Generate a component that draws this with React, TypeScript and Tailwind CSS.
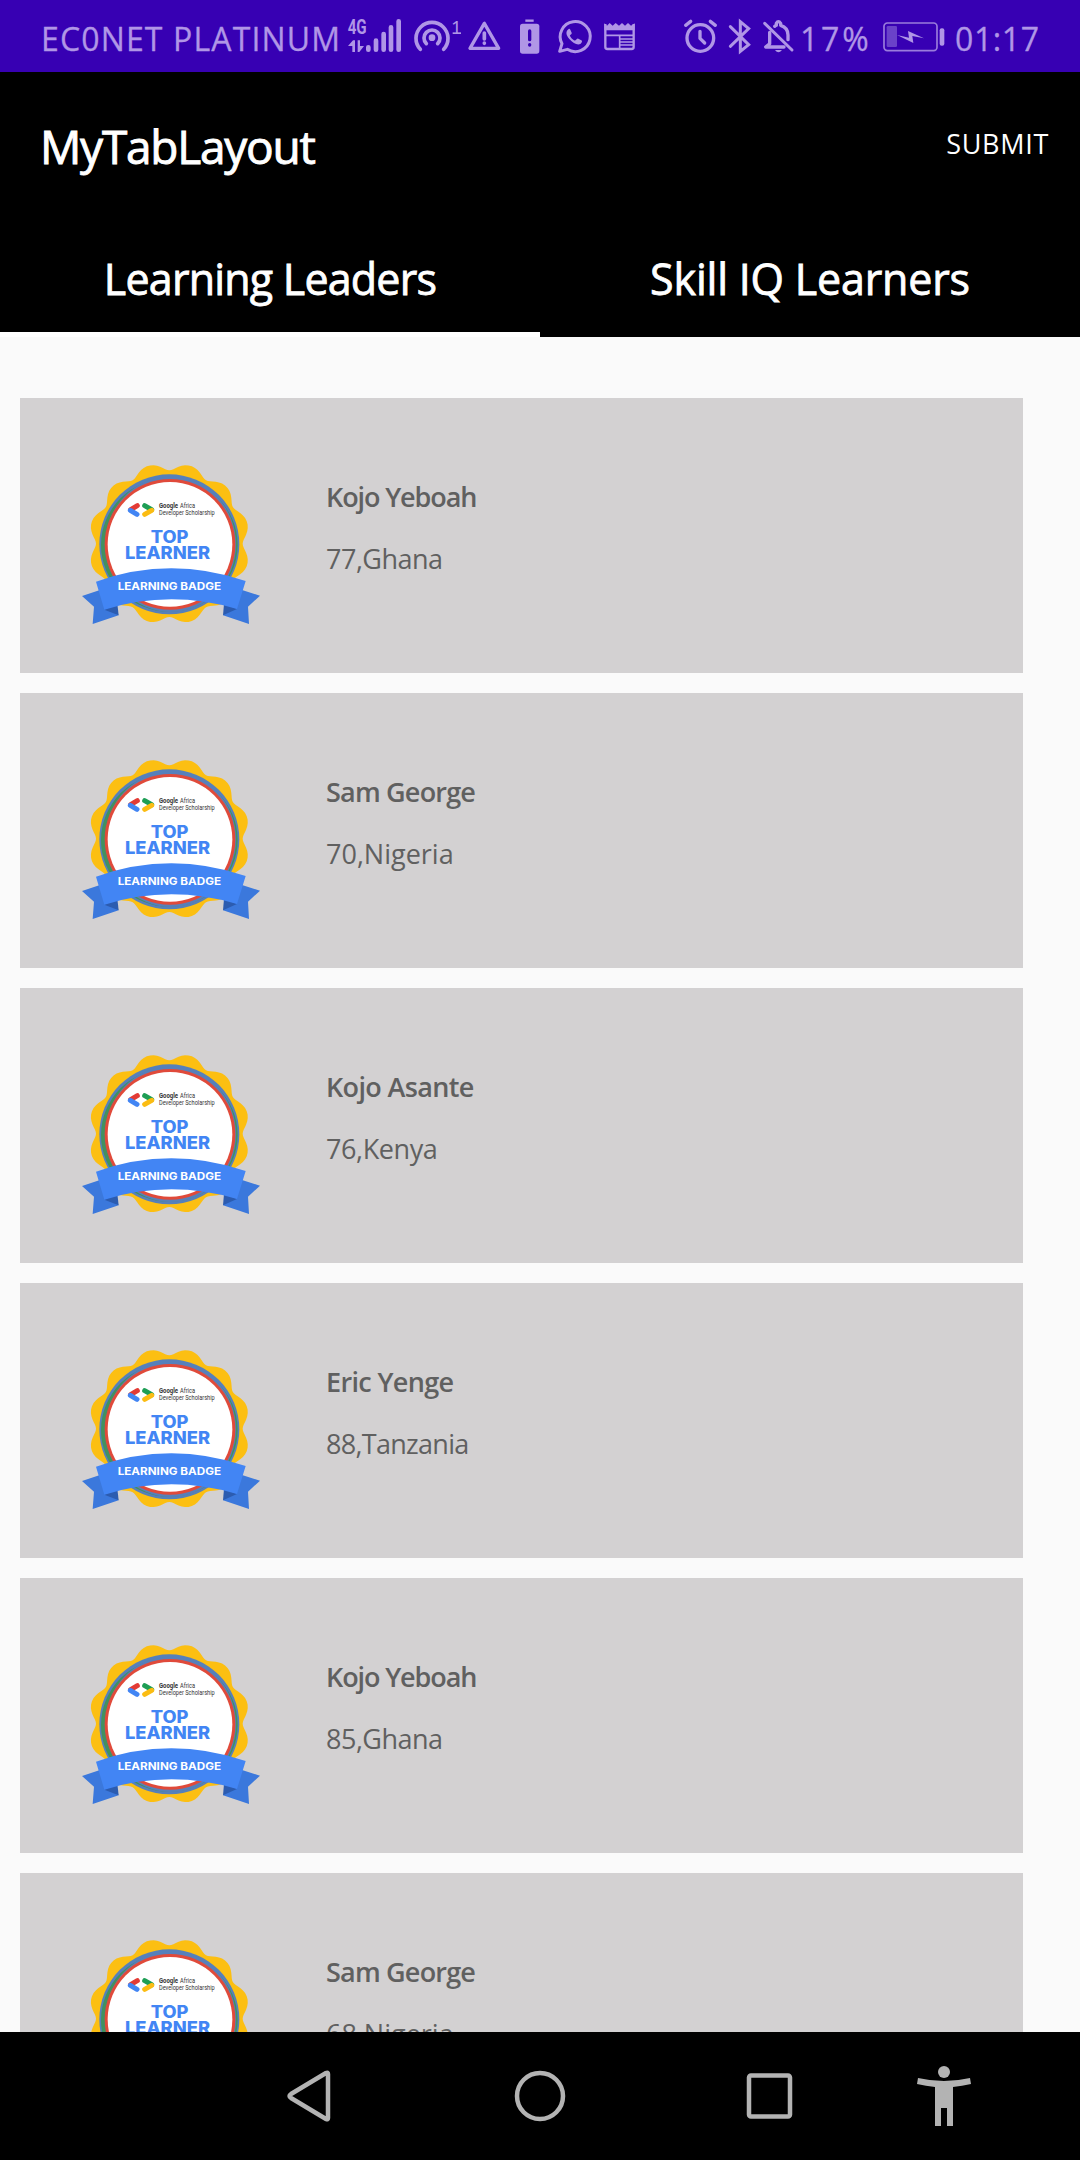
const LEARNERS = [
  { name: "Kojo Yeboah", detail: "77,Ghana", nameClass: "tracking-[-1.1px]", detailClass: "tracking-[-0.5px]" },
  { name: "Sam George", detail: "70,Nigeria", nameClass: "tracking-[-0.8px]", detailClass: "tracking-normal" },
  { name: "Kojo Asante", detail: "76,Kenya", nameClass: "tracking-[-0.65px]", detailClass: "tracking-[-0.4px]" },
  { name: "Eric Yenge", detail: "88,Tanzania", nameClass: "tracking-[-0.65px]", detailClass: "tracking-[-0.7px]" },
  { name: "Kojo Yeboah", detail: "85,Ghana", nameClass: "tracking-[-1.1px]", detailClass: "tracking-[-0.5px]" },
  { name: "Sam George", detail: "68,Nigeria", nameClass: "tracking-[-0.8px]", detailClass: "tracking-normal" },
];

const scallop = (() => {
  const pts: string[] = [];
  for (let i = 0; i < 360; i += 2) {
    const a = (i * Math.PI) / 180;
    const t = 12 * (a - Math.PI / 12);
    const r = 231 + 11 * Math.cos(t);
    const skew = a - 0.02 * Math.sin(t) * -1;
    pts.push(`${(298 + r * Math.sin(skew)).toFixed(1)} ${(281 - r * Math.cos(skew)).toFixed(1)}`);
  }
  return `M${pts.join("L")}Z`;
})();

function Badge() {
  return (
    <svg viewBox="0 0 600 570" className="h-[190px] w-[200px] shrink-0">
      <path d={scallop} fill="#fcbf12" />
      <circle cx="298" cy="283" r="210" fill="#5680bb" />
      <ellipse cx="298" cy="285" rx="205" ry="200" fill="#42915f" />
      <ellipse cx="302" cy="283" rx="196" ry="203" fill="#5680bb" />
      <circle cx="300" cy="283" r="196" fill="#e04a3a" />
      <circle cx="300" cy="283" r="187" fill="#fff" />
      <g strokeWidth="15" strokeLinecap="round" fill="none">
        <path d="M202 167L182 179" stroke="#e33b35" />
        <path d="M181 181L201 193" stroke="#4285f4" />
        <path d="M224 167L245 179" stroke="#1e9e55" />
        <path d="M245 181L224 193" stroke="#fbbc12" />
      </g>
      <g fontFamily="Roboto, sans-serif" fill="#333">
        <text x="267" y="174" fontSize="19" fontWeight="700" textLength="57" lengthAdjust="spacingAndGlyphs">Google</text>
        <text x="330" y="174" fontSize="19" textLength="45" lengthAdjust="spacingAndGlyphs">Africa</text>
        <text x="267" y="195" fontSize="19" textLength="167" lengthAdjust="spacingAndGlyphs">Developer Scholarship</text>
      </g>
      <g fontFamily="Inter, sans-serif" fontWeight="800" fill="#4285f4">
        <text x="242" y="279" fontSize="50" textLength="113" lengthAdjust="spacingAndGlyphs">TOP</text>
        <text x="165" y="327" fontSize="52" textLength="255" lengthAdjust="spacingAndGlyphs">LEARNER</text>
      </g>
      <path d="M36 438L90 420L146 496L68 522L72 470Z" fill="#3b78dc" />
      <path d="M570 437L516 420L459 496L537 522L534 470Z" fill="#3b78dc" />
      <path d="M103 479L142 462L146 496Z" fill="#2c5cb0" />
      <path d="M501 477L462 462L459 496Z" fill="#2c5cb0" />
      <path d="M78 395Q300 316 527 393L501 477Q300 418 103 479Z" fill="#4285f4" />
      <text x="143" y="420" fontSize="31" fontWeight="700" fontFamily="Inter, sans-serif" fill="#fff" textLength="310" lengthAdjust="spacingAndGlyphs">LEARNING BADGE</text>
    </svg>
  );
}

function SignalGroup() {
  return (
    <svg viewBox="0 0 990 240" className="h-[80px] w-[330px] shrink-0" fill="none" stroke="#b096e6" strokeLinecap="round" strokeLinejoin="round">
      <g stroke="none" fill="#b096e6">
        <text x="53" y="101" fontSize="60" fontWeight="700" fontFamily="Roboto, sans-serif" textLength="57" lengthAdjust="spacingAndGlyphs">4G</text>
        <path d="M54 138L69 121H75V156H67V138ZM83 121H90V138H102L88 156H83Z" />
        <text x="363" y="101" fontSize="56" fontFamily="Noto Sans, sans-serif">1</text>
        <path d="M368 97H393V102H368Z" />
      </g>
      <g strokeWidth="14">
        <path d="M115 142V149M138 122V149M161 102V149M183 82V149M206 64V149" />
      </g>
      <g strokeWidth="11">
        <path d="M271 148A48 48 0 1 1 341 148M289 131A24 24 0 1 1 323 131" />
        <circle cx="306" cy="113" r="10" fill="#b096e6" stroke="none" />
        <path d="M463 70L420 145H506Z" strokeWidth="10" />
        <path d="M463 99V117M463 129V130" />
      </g>
      <rect x="570" y="71" width="58" height="90" rx="8" fill="#b096e6" stroke="none" />
      <path d="M586 62H611" strokeWidth="7" strokeLinecap="butt" />
      <path d="M599 93V119M599 134V135" stroke="#3700b3" strokeWidth="10" />
      <path d="M689 154L696 131A45 45 0 1 1 712 148Z" strokeWidth="9" />
      <path d="M716 87C706 95 708 105 718 117C730 130 743 137 752 131C757 127 757 123 754 121L745 116C740 114 738 124 732 121C726 117 722 112 720 108C718 104 727 103 725 98L721 89C719 86 718 86 716 87Z" fill="#b096e6" stroke="none" />
      <g strokeLinecap="butt">
        <path d="M826 72V141Q826 147 832 147H905Q911 147 911 141V72" strokeWidth="7" />
        <path d="M823 70L831 77L839 69L848 77L857 69L867 77L876 69L885 77L894 69L903 77L914 70V91H823Z" fill="#b096e6" stroke="none" />
        <path d="M826 106H911M869 106V147" strokeWidth="5" />
        <path d="M869 117H911M869 126H911M869 135H911" strokeWidth="4" />
      </g>
    </svg>
  );
}

function AlertGroup() {
  return (
    <svg viewBox="0 0 420 240" className="h-[80px] w-[140px] shrink-0" fill="none" stroke="#b096e6" strokeLinecap="round" strokeLinejoin="round">
      <circle cx="121" cy="114" r="40" strokeWidth="10" />
      <path d="M120 94V115L134 129" strokeWidth="10" />
      <path d="M77 76L92 64M151 64L166 76" strokeWidth="10" />
      <path d="M211 80L266 134L241 154V65L266 86L211 139" strokeWidth="9" strokeLinejoin="miter" />
      <path d="M314 70L396 150" strokeWidth="9" />
      <path d="M344 79Q347 77 349 76V70Q355 60 362 70V76Q384 83 384 105V119M329 97V131L317 141H372" strokeWidth="10" />
      <path d="M345 150H366Q355 164 345 150Z" fill="#b096e6" stroke="none" />
    </svg>
  );
}

function BatteryIcon() {
  return (
    <svg viewBox="0 0 186 90" className="h-[30px] w-[62px] shrink-0">
      <rect x="3" y="3" width="159" height="83" rx="10" fill="none" stroke="#9a7cdc" strokeWidth="5" />
      <rect x="11" y="12" width="31" height="63" rx="4" fill="#6a42c9" />
      <path d="M42 39L78 47L75 27L123 49L88 42L91 63Z" fill="#b096e6" />
      <rect x="170" y="19" width="14" height="52" rx="6" fill="#b096e6" />
    </svg>
  );
}

export default function App() {
  return (
    <div className="flex h-[2160px] w-[1080px] flex-col overflow-hidden bg-[#fafafa] font-['Open_Sans',sans-serif] whitespace-nowrap">
      <div className="flex h-[72px] shrink-0 items-start overflow-hidden bg-[#3700b3] text-[32px] leading-[78px] text-[#b096e6]">
        <div className="w-[330px] shrink-0 pl-[41px] tracking-[1.15px] [-webkit-text-stroke:0.3px]">EC0NET PLATINUM</div>
        <SignalGroup />
        <AlertGroup />
        <div className="w-[83px] shrink-0 tracking-[2.8px] [-webkit-text-stroke:0.3px]">17%</div>
        <div className="pt-[22px]"><BatteryIcon /></div>
        <div className="pl-[10px] tracking-[0.6px] [-webkit-text-stroke:0.3px]">01:17</div>
      </div>
      <header className="shrink-0 bg-black text-white">
        <div className="flex h-[148px] items-center justify-between pr-[31px] pl-[40px]">
          <h1 className="text-[46px] leading-none tracking-[-1.25px] [-webkit-text-stroke:0.9px]">MyTabLayout</h1>
          <button className="pb-[5px] text-[27px] leading-none tracking-[0.7px]">SUBMIT</button>
        </div>
        <nav className="grid h-[117px] grid-cols-2 text-[43px] [-webkit-text-stroke:0.8px]">
          <button className="flex items-center justify-center border-b-[5px] border-white pt-[6px] tracking-[-0.8px]">Learning Leaders</button>
          <button className="flex items-center justify-center border-b-[5px] border-black pt-[6px] tracking-[-0.2px]">Skill IQ Learners</button>
        </nav>
      </header>
      <main className="flex min-h-0 flex-1 flex-col gap-5 overflow-hidden pt-[61px] pr-[57px] pl-5">
        {LEARNERS.map((p, i) => (
          <article key={i} className="flex h-[275px] shrink-0 items-start bg-[#d3d1d2] pt-[52px] pl-[50px] text-[27px] leading-[40px] text-[#606060]">
            <Badge />
            <div className="flex flex-col gap-[22px] pt-[27px] pl-[56px]">
              <h2 className={`font-semibold ${p.nameClass}`}>{p.name}</h2>
              <p className={p.detailClass}>{p.detail}</p>
            </div>
          </article>
        ))}
      </main>
      <footer className="flex h-[128px] shrink-0 items-start bg-black pl-[270px]">
        <svg viewBox="0 0 750 128" className="h-[128px] w-[750px]" fill="none" stroke="#b3b3b3" strokeWidth="4.5" strokeLinejoin="round">
          <path d="M58 42V86Q58 88 56 87L21 66Q18 64 21 62L56 41Q58 40 58 42Z" />
          <circle cx="270" cy="64" r="23" />
          <rect x="479" y="43.5" width="41" height="41" rx="2" />
          <g fill="#b3b3b3" stroke="none">
            <circle cx="674" cy="40" r="6" />
            <path d="M648 46Q674 52 700 46L701 52Q692 54 683 55V94H677V76H671V94H665V55Q656 54 647 52Z" />
          </g>
        </svg>
      </footer>
    </div>
  );
}
